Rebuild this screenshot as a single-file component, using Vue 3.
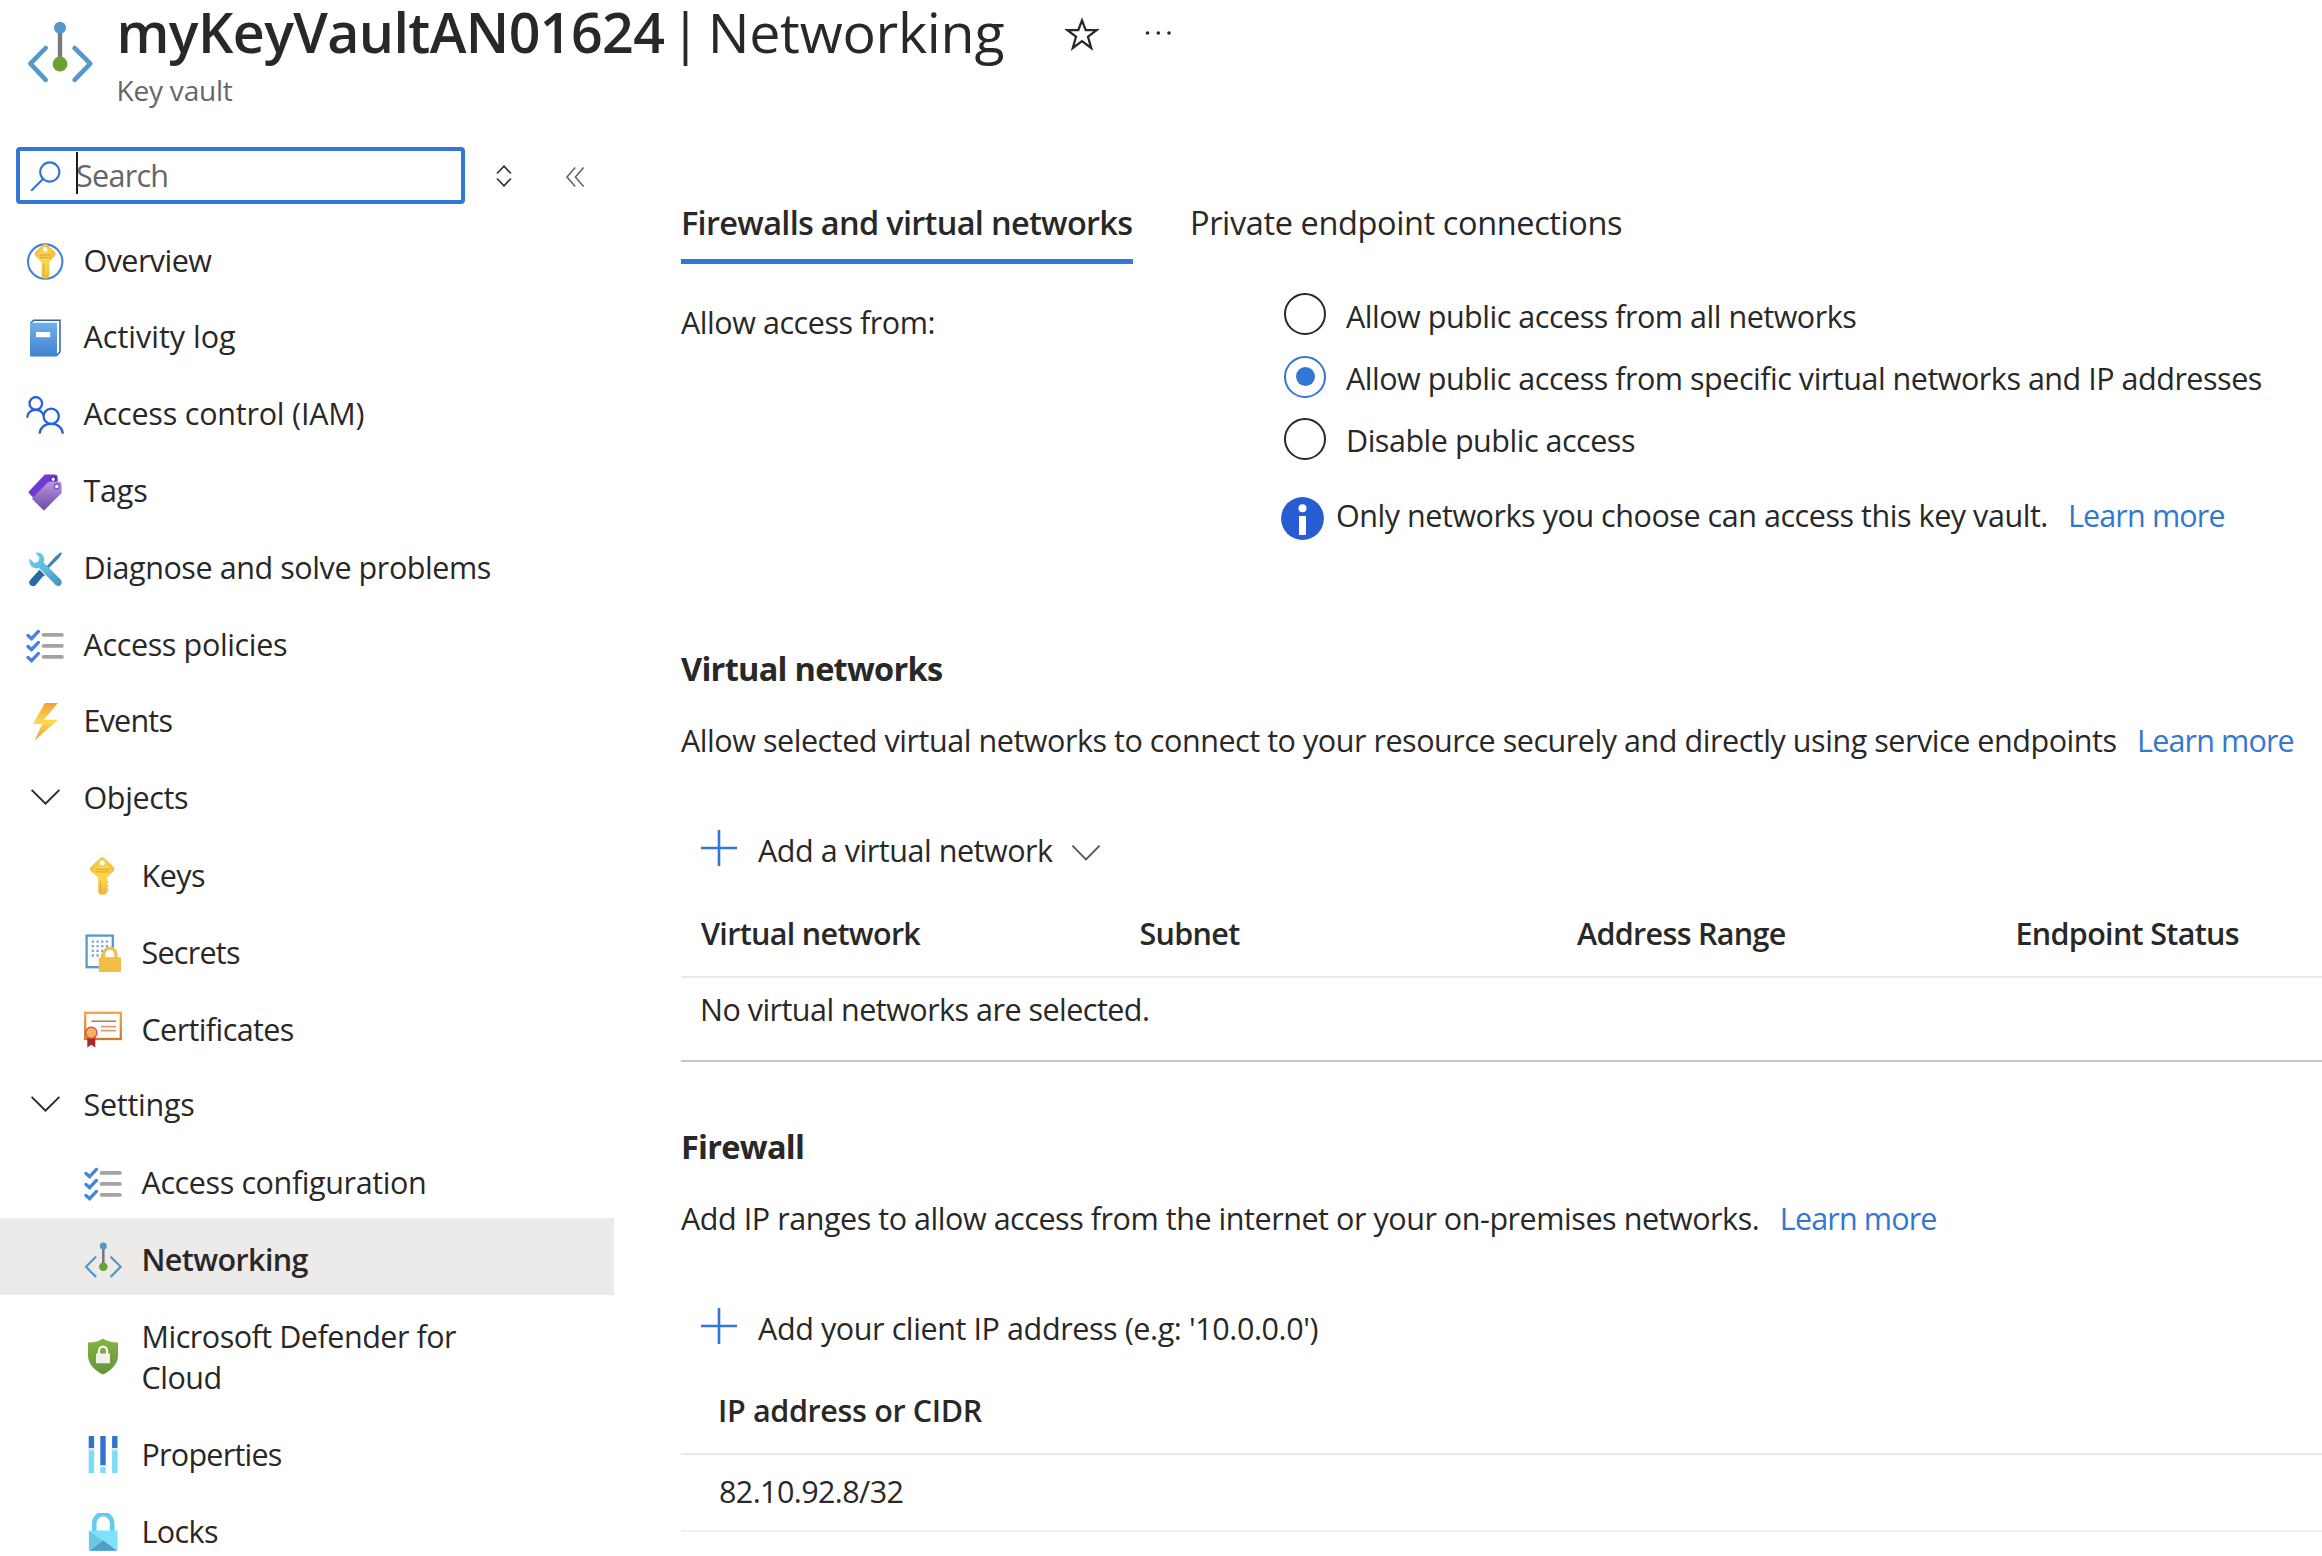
<script setup>
const nav = [
  { icon: 'overview', label: 'Overview', ls: -0.55 },
  { icon: 'log', label: 'Activity log', ls: 0 },
  { icon: 'iam', label: 'Access control (IAM)', ls: -0.2 },
  { icon: 'tags', label: 'Tags', ls: -0.2 },
  { icon: 'tools', label: 'Diagnose and solve problems', ls: -0.42 },
  { icon: 'checks', label: 'Access policies', ls: -0.36 },
  { icon: 'bolt', label: 'Events', ls: -0.8 },
  { icon: 'chevron', label: 'Objects', ls: -0.35 },
  { icon: 'key', label: 'Keys', sub: true, ls: -0.5 },
  { icon: 'secret', label: 'Secrets', sub: true, ls: -0.75 },
  { icon: 'certificate', label: 'Certificates', sub: true, ls: -0.6 },
  { icon: 'chevron', label: 'Settings', ls: -0.25 },
  { icon: 'checks', label: 'Access configuration', sub: true, ls: -0.39 },
  { icon: 'network', label: 'Networking', sub: true, active: true, ls: -0.6 },
  { icon: 'shield', label: 'Microsoft Defender for Cloud', sub: true, ls: -0.48 },
  { icon: 'sliders', label: 'Properties', sub: true, ls: -0.75 },
  { icon: 'lock', label: 'Locks', sub: true, ls: -0.6 },
]
const options = [
  'Allow public access from all networks',
  'Allow public access from specific virtual networks and IP addresses',
  'Disable public access',
]
const selected = 1
const columns = ['Virtual network', 'Subnet', 'Address Range', 'Endpoint Status']
</script>

<template>
  <div class="page">
    <header class="header">
      <svg class="logo" width="70" height="66" viewBox="26 20 70 66" fill="none">
        <path d="M60 30V62" stroke="#7a7a7a" stroke-width="4.4" />
        <circle cx="60" cy="27.8" r="6" fill="#5596c6" />
        <circle cx="60" cy="64" r="7.4" fill="#6ba12e" />
        <path d="M45.7 48 30.4 63.6 45.7 79.8M74.6 48 90.3 63.6 74.6 79.8" stroke="#5599c9" stroke-width="4.6" stroke-linecap="round" stroke-linejoin="round" />
      </svg>
      <div class="heading">
        <h1 class="title">
          <b>myKeyVaultAN01624</b><span class="bar">|</span><span class="section-name">Networking</span>
          <svg class="star" width="34" height="34" viewBox="0 0 34 34" fill="none" stroke="#292827" stroke-width="2.3">
            <path d="M17 3.4 20.7 13.1H31.6L23 19.7 26.2 31 17 24.2 7.8 31 11 19.7 2.4 13.1H13.3Z" />
          </svg>
          <svg class="dots" width="26" height="6" viewBox="0 0 26 6" fill="#292827">
            <circle cx="2.5" cy="3" r="1.8" /><circle cx="13.3" cy="3" r="1.8" /><circle cx="24" cy="3" r="1.8" />
          </svg>
        </h1>
        <div class="subtitle">Key vault</div>
      </div>
    </header>

    <div class="body">
      <aside class="sidebar">
        <div class="search-row">
          <div class="search">
            <svg width="32" height="32" viewBox="0 0 32 32" fill="none" stroke="#3277d2" stroke-width="2.1">
              <circle cx="19.8" cy="12" r="9.6" /><path d="M13 19 1.2 30.8" />
            </svg>
            <i class="caret"></i><span>Search</span>
          </div>
          <svg class="sort" width="16" height="22" viewBox="0 0 16 22" fill="none" stroke="#292827" stroke-width="1.5"><path d="M1 8.6 8 1.2 15 8.6M1 13.4 8 20.8 15 13.4" /></svg>
          <svg class="collapse" width="20" height="22" viewBox="0 0 20 22" fill="none" stroke="#666" stroke-width="1.6"><path d="M10.2 1.4 2 11 10.2 20.6M18.6 1.4 10.4 11 18.6 20.6" /></svg>
        </div>

        <nav>
          <div v-for="item in nav" :key="item.label" class="item" :class="{ sub: item.sub, active: item.active }">
            <svg class="icon" width="38" height="38" viewBox="0 0 38 38" fill="none">
              <template v-if="item.icon === 'overview'">
                <circle cx="19.2" cy="19.6" r="17.2" stroke="#3f84da" stroke-width="2.1" />
                <path d="M16.6 3.2Q19.2 1 21.8 3.2L28.8 9.8Q30.6 12 28.8 14.2L23.2 20V23.5L24 25 22.8 26.4 24 28 22.8 29.6 24 31.2 23 33V34.6L19.3 37.4 15.6 34V20L9.6 14.2Q7.8 12 9.6 9.8Z" fill="url(#gold)" />
                <circle cx="19.2" cy="7.2" r="2.2" fill="#fff" />
                <path d="M14 13H25M14 15.4H25" stroke="#eda53a" stroke-width="1.5" />
                <path d="M17.6 22V34.5" stroke="#f0ad3c" stroke-width="1.4" />
              </template>
              <template v-else-if="item.icon === 'log'">
                <path d="M4.6 4.2 7.6 1.2H34V32.8L30.6 36.8" stroke="#2b62ad" stroke-width="1.5" />
                <rect x="4" y="3.8" width="27" height="33.6" rx="0.6" fill="url(#book)" />
                <rect x="10" y="13" width="14.2" height="5.2" fill="#fff" />
              </template>
              <template v-else-if="item.icon === 'iam'">
                <g stroke="#2560dc" stroke-width="2.3">
                  <circle cx="9.8" cy="7.4" r="6.3" /><circle cx="25.2" cy="20.2" r="7.6" />
                  <path d="M1.3 21.8C1.5 16.6 5 13.8 9.6 13.8 13.6 13.8 16.6 16 17.6 19.4M13.6 37.8C13.8 31.6 18.8 27.9 25.2 27.9 31.6 27.9 36.6 31.6 36.8 37.8" />
                </g>
              </template>
              <template v-else-if="item.icon === 'tags'">
                <path d="M19.3 1.6H28.6Q31.7 1.6 31.7 4.7V11L7.6 25 2.8 20.1Q2.2 19.4 2.8 18.6L17.9 2.4Q18.6 1.6 19.3 1.6Z" fill="#7039d2" />
                <circle cx="27.2" cy="6.2" r="2.4" fill="#fff" stroke="#4a2496" stroke-width="1.3" />
                <path d="M24.8 8.6H33Q35.6 8.8 35.6 11.6V20L18.6 36.9Q17.9 37.5 17.2 36.9L6.6 26.4Q6 25.6 6.6 24.8L21.6 9.4Q22.9 8.6 24.8 8.6Z" fill="url(#tag)" />
                <circle cx="30.8" cy="13.4" r="2.4" fill="#fff" stroke="#7a50b8" stroke-width="1.3" />
              </template>
              <template v-else-if="item.icon === 'tools'">
                <path d="M20 17 29.4 6.4 34.6 2.2 36 3.6 32.6 8.6 22.4 18.6Z" fill="#4585b5" />
                <path d="M13.5 19.8 19 25.4 16.8 26.6 10 34.8Q7.6 37.4 5 35.6L3.6 34.2Q2.2 32 4.2 30L11.8 21.4Z" fill="#2c67aa" />
                <path d="M9.4 2.8Q16.6 1.4 18 8.2 18.4 10.2 17.6 12.4L34.6 29.6Q36.8 32.6 34.8 35 32.2 37 29.6 35L13 18Q6.2 19.4 3.6 13.6 2.8 11 3.6 8.6L8.4 13 12.2 11.8 13.4 7.8Z" fill="url(#wrench)" />
              </template>
              <template v-else-if="item.icon === 'checks'">
                <path d="M2 9.4 5.6 12.6 12.4 5.4M2 20.4 5.6 23.6 12.4 16.4M2 31.4 5.6 34.6 12.4 27.4" stroke="#4484de" stroke-width="3.3" stroke-linecap="round" />
                <path d="M17.6 8.9H35.9M17.6 19.9H35.9M17.6 30.9H35.9" stroke="#a3a3a3" stroke-width="3.8" stroke-linecap="round" />
              </template>
              <path v-else-if="item.icon === 'bolt'" d="M18.9 0H31.9L18 16.8H32L8.4 37.8 16.2 21H7Z" fill="url(#bolt)" />
              <path v-else-if="item.icon === 'chevron'" d="M5.6 9.8 19.5 23.6 33.4 9.8" stroke="#292827" stroke-width="1.9" />
              <template v-else-if="item.icon === 'key'">
                <path d="M15.6 1.4Q18.2-.8 20.8 1.4L29.2 9.6Q31.4 12 29.2 14.4L23.2 20.6V23.6L24.6 25.4 23 27.2 24.6 29 23 30.6 24.6 32.4 23.2 34V35.6L20 37.8H16.6L14.2 35.4V20.6L7.2 14.4Q5 12 7.2 9.6Z" fill="url(#gold)" />
                <circle cx="18.2" cy="5.8" r="2.5" fill="#fff" />
                <path d="M12 12.4H25M12 14.9H25M16.5 24V35" stroke="#f0a137" stroke-width="1.2" />
              </template>
              <template v-else-if="item.icon === 'secret'">
                <rect x="2.6" y="1.6" width="26.2" height="31.6" stroke="#5899c8" stroke-width="2.3" fill="#fff" />
                <path d="M7.7 7.6H25M7.7 12.2H25M7.7 16.8H25M7.7 21.5H25" stroke="#6fadd3" stroke-width="2.3" stroke-dasharray="2.3 2.4" />
                <path d="M19.6 25V20.4a6.2 6.2 0 0 1 12.4 0V25Z" fill="#fff" stroke="#f2bf46" stroke-width="3.2" />
                <rect x="14.8" y="23.2" width="22.2" height="15" rx="1.4" fill="#f2bf46" />
              </template>
              <template v-else-if="item.icon === 'certificate'">
                <rect x="1.2" y="2.8" width="35.6" height="26.2" stroke="url(#cert)" stroke-width="2.3" fill="#fff" />
                <path d="M7.4 11.2H32" stroke="#c06a3c" stroke-width="1.4" />
                <path d="M17 16.6H32M17 20.6H32" stroke="#dd9a72" stroke-width="1.7" />
                <path d="M3.3 27H11.3V37.4L7.3 34.8 3.3 37.4Z" fill="#a72a26" />
                <circle cx="7.3" cy="22.8" r="5.6" fill="#f4b55f" stroke="#dc4b3b" stroke-width="1.4" />
              </template>
              <template v-else-if="item.icon === 'network'">
                <path d="M19.3 6V25" stroke="#7a7a7a" stroke-width="2.6" />
                <circle cx="19.3" cy="5.1" r="3.5" fill="#5596c6" /><circle cx="19.3" cy="25.8" r="4.3" fill="#6ba12e" />
                <path d="M11.4 16.2 2 25.8 11.4 35.4M27.2 16.2 36.6 25.8 27.2 35.4" stroke="#5599c9" stroke-width="2.3" stroke-linecap="round" />
              </template>
              <template v-else-if="item.icon === 'shield'">
                <path d="M19 .6Q24.6 4.4 34 4.6V17.6C34 27 26 33.4 19 36.6 12 33.4 4 27 4 17.6V4.6Q13.4 4.4 19 .6Z" fill="url(#shield)" />
                <path d="M14.9 17V13.2a4.1 4.6 0 0 1 8.2 0V17" stroke="#fff" stroke-width="2.2" />
                <rect x="12" y="15.6" width="14" height="9.6" rx="0.8" fill="#f1f2ee" />
              </template>
              <template v-else-if="item.icon === 'sliders'">
                <path d="M7.4 14V37M19 31V37M30.8 14V37" stroke="#79dcf8" stroke-width="5.4" />
                <path d="M7.4-.6V12.4M19-.6V29.6M30.8-.6V12.4" stroke="#3073cf" stroke-width="5.4" />
                <path d="M4 13.3H10.8M15.6 30.4H22.4M27.4 13.3H34.2" stroke="#e4e6e8" stroke-width="2.4" />
              </template>
              <template v-else-if="item.icon === 'lock'">
                <path d="M10.2 18.6V10.6a9 9.6 0 0 1 18 0V18.6" stroke="#63cbee" stroke-width="4.6" />
                <rect x="4.8" y="17.4" width="28.8" height="20.4" rx="1.2" fill="#7fe2fb" />
                <path d="M5 18 19.2 28 5 37.2Z" fill="#6dc5e4" /><path d="M5.4 37.8 19.2 27.6 33 37.8Z" fill="#4f9fca" />
              </template>
            </svg>
            <span class="label" :style="{ letterSpacing: item.ls + 'px' }">{{ item.label }}</span>
          </div>
        </nav>
      </aside>

      <main class="main">
        <div class="tabs">
          <div class="tab current">Firewalls and virtual networks</div>
          <div class="tab">Private endpoint connections</div>
        </div>

        <section class="access">
          <div class="access-label">Allow access from:</div>
          <div>
            <label v-for="(o, i) in options" :key="o" class="option" :class="{ on: i === selected }">
              <i class="radio"></i><span>{{ o }}</span>
            </label>
            <div class="info">
              <svg width="43" height="43" viewBox="0 0 43 43">
                <circle cx="21.5" cy="21.5" r="21.4" fill="#275cd3" />
                <circle cx="21.5" cy="11.2" r="4" fill="#fff" /><path d="M18 19H25V38H18Z" fill="#fff" />
              </svg>
              <span>Only networks you choose can access this key vault.</span><a>Learn more</a>
            </div>
          </div>
        </section>

        <section class="block">
          <h2>Virtual networks</h2>
          <p>Allow selected virtual networks to connect to your resource securely and directly using service endpoints<a>Learn more</a></p>
          <div class="command">
            <svg class="plus" width="36" height="36" viewBox="0 0 36 36" stroke="#3277d2" stroke-width="2.6"><path d="M0 18H36M18 0V36" /></svg>
            <span>Add a virtual network</span>
            <svg class="down" width="30" height="18" viewBox="0 0 30 18" fill="none" stroke="#555" stroke-width="1.8"><path d="M1.4 1.6 15 15.4 28.6 1.6" /></svg>
          </div>
          <div class="thead"><div v-for="c in columns" :key="c">{{ c }}</div></div>
          <div class="empty">No virtual networks are selected.</div>
        </section>

        <section class="block firewall">
          <h2>Firewall</h2>
          <p>Add IP ranges to allow access from the internet or your on-premises networks.<a>Learn more</a></p>
          <div class="command client">
            <svg class="plus" width="36" height="36" viewBox="0 0 36 36" stroke="#3277d2" stroke-width="2.6"><path d="M0 18H36M18 0V36" /></svg>
            <span>Add your client IP address (e.g: '10.0.0.0')</span>
          </div>
          <div class="thead ip">IP address or CIDR</div>
          <div class="ip-row">82.10.92.8/32</div>
        </section>
      </main>
    </div>

    <svg class="defs" width="0" height="0">
      <defs>
        <radialGradient id="gold" cx=".5" cy=".42" r=".55"><stop offset="0" stop-color="#fbdb4d" /><stop offset=".5" stop-color="#f8d04a" /><stop offset="1" stop-color="#f0b540" /></radialGradient>
        <linearGradient id="book" x1="0" y1="0" x2="0" y2="1"><stop offset="0" stop-color="#6fb0ea" /><stop offset="1" stop-color="#3f82cf" /></linearGradient>
        <linearGradient id="tag" x1="0" y1="0" x2="0" y2="1"><stop offset="0" stop-color="#b995e2" /><stop offset="1" stop-color="#6f4aa8" /></linearGradient>
        <linearGradient id="wrench" x1="0" y1="0" x2="1" y2="1"><stop offset="0" stop-color="#6ad2f3" /><stop offset=".5" stop-color="#5cbbdf" /><stop offset="1" stop-color="#4690b6" /></linearGradient>
        <linearGradient id="bolt" x1="0" y1="0" x2="0" y2="1"><stop offset="0" stop-color="#eea23e" /><stop offset=".5" stop-color="#f9da4c" /><stop offset="1" stop-color="#ee9b3c" /></linearGradient>
        <linearGradient id="cert" x1="0" y1="0" x2="0" y2="1"><stop offset="0" stop-color="#eda647" /><stop offset="1" stop-color="#cf7a2e" /></linearGradient>
        <linearGradient id="shield" x1="0" y1="0" x2="0" y2="1"><stop offset="0" stop-color="#83b544" /><stop offset="1" stop-color="#66923a" /></linearGradient>
      </defs>
    </svg>
  </div>
</template>

<style>
body { background: #fff; overflow: hidden; }
</style>

<style scoped>
.page { width: 2322px; height: 1556px; overflow: hidden; background: #fff; color: #292827; font: 400 30.5px/48px "Open Sans", "Noto Sans", sans-serif; letter-spacing: -0.45px; }
svg { flex: none; display: block; }
.defs { position: absolute; }
.header { display: flex; height: 117px; }
.logo { margin: 20px 0 0 26px; }
.heading { margin-left: 20.5px; }
.title { display: flex; margin: 0; font-size: 55.5px; font-weight: 400; line-height: 63px; letter-spacing: -0.2px; }
.title b { font-weight: 600; letter-spacing: -0.6px; }
.bar { margin: 0 7px 0 6px; }
.section-name { letter-spacing: -0.25px; }
.star { margin: 17px 0 0 61px; }
.dots { margin: 30px 0 0 46px; }
.subtitle { font-size: 28px; line-height: 54px; color: #666; letter-spacing: -0.2px; }
.body { display: flex; }
.sidebar { width: 614px; flex: none; }
.search-row { display: flex; align-items: center; height: 57px; margin: 30px 0 16px 16px; }
.search { display: flex; align-items: center; box-sizing: border-box; width: 449px; height: 57px; padding-left: 10px; border: 4px solid #3277d2; border-radius: 4px; color: #666; letter-spacing: -0.7px; }
.search span { margin-top: -2px; }
.caret { width: 2px; height: 42px; margin: -5px -2px 0 14px; background: #1b1a19; }
.sort { margin-left: 30.5px; }
.collapse { margin: 2px 0 0 53.5px; }
.item { display: flex; align-items: center; box-sizing: border-box; min-height: 76.8px; padding: 6px 0 0 26px; }
.item.sub { padding-left: 84px; }
.item.active { background: #edebe9; font-weight: 600; }
.label { width: 450px; margin: -2px 0 0 19.5px; line-height: 41.7px; }
.sub .label { width: 350px; padding: 17.6px 0 17.4px; margin-top: -3px; margin-bottom: -3px; }
.main { flex: 1; min-width: 0; padding: 82px 0 0 67px; }
.tabs { display: flex; gap: 57px; font-size: 32.5px; letter-spacing: -0.38px; }
.tab { height: 60px; white-space: nowrap; }
.tab.current { font-weight: 600; letter-spacing: -0.7px; border-bottom: 5px solid #3277d2; width: 452px; }
.access { display: flex; margin-top: 19px; }
.access-label { width: 603px; margin-top: 15px; letter-spacing: -0.45px; }
.option { display: flex; align-items: center; height: 62.4px; white-space: nowrap; letter-spacing: -0.48px; }
.option span { margin: 3px 0 0 20px; }
.radio { position: relative; box-sizing: border-box; width: 42px; height: 42px; border: 2px solid #292827; border-radius: 50%; }
.on .radio { border-color: #3277d2; }
.on .radio::after { content: ""; position: absolute; inset: 9.5px; border-radius: 50%; background: #3277d2; }
.info { display: flex; height: 43px; margin: 27px 0 0 -3px; align-items: center; white-space: nowrap; }
.info span { margin: -8px 0 0 12px; }
.info a { margin: -8px 0 0 20px; }
a { color: #3277d2; letter-spacing: -0.85px; }
p a { margin-left: 20.5px; }
.block { margin-top: 105px; }
.firewall { margin-top: 61px; }
h2 { margin: 0; font-size: 32.5px; line-height: 48px; font-weight: 700; letter-spacing: -0.72px; }
p { margin: 23px 0 0; white-space: nowrap; }
.command { display: flex; align-items: center; height: 60px; margin: 54px 0 0 20px; }
.command span { margin: 4px 0 0 21px; }
.client span { letter-spacing: -0.4px; margin-top: 3px; }
.down { margin: 10px 0 0 18px; }
.thead { display: grid; grid-template-columns: 438.5px 437.5px 438.5px 1fr; padding: 31px 0 19px 20px; border-bottom: 2px solid #e9e9e9; font-weight: 600; letter-spacing: -0.68px; }
.empty { padding: 7px 0 27px 19px; border-bottom: 2px solid #c8c8c8; letter-spacing: -0.52px; }
.thead.ip { padding: 30px 0 19px 37px; letter-spacing: -0.35px; }
.ip-row { padding: 12px 0 15px 38px; border-bottom: 2px solid #f0f0f0; letter-spacing: -0.6px; }
</style>
